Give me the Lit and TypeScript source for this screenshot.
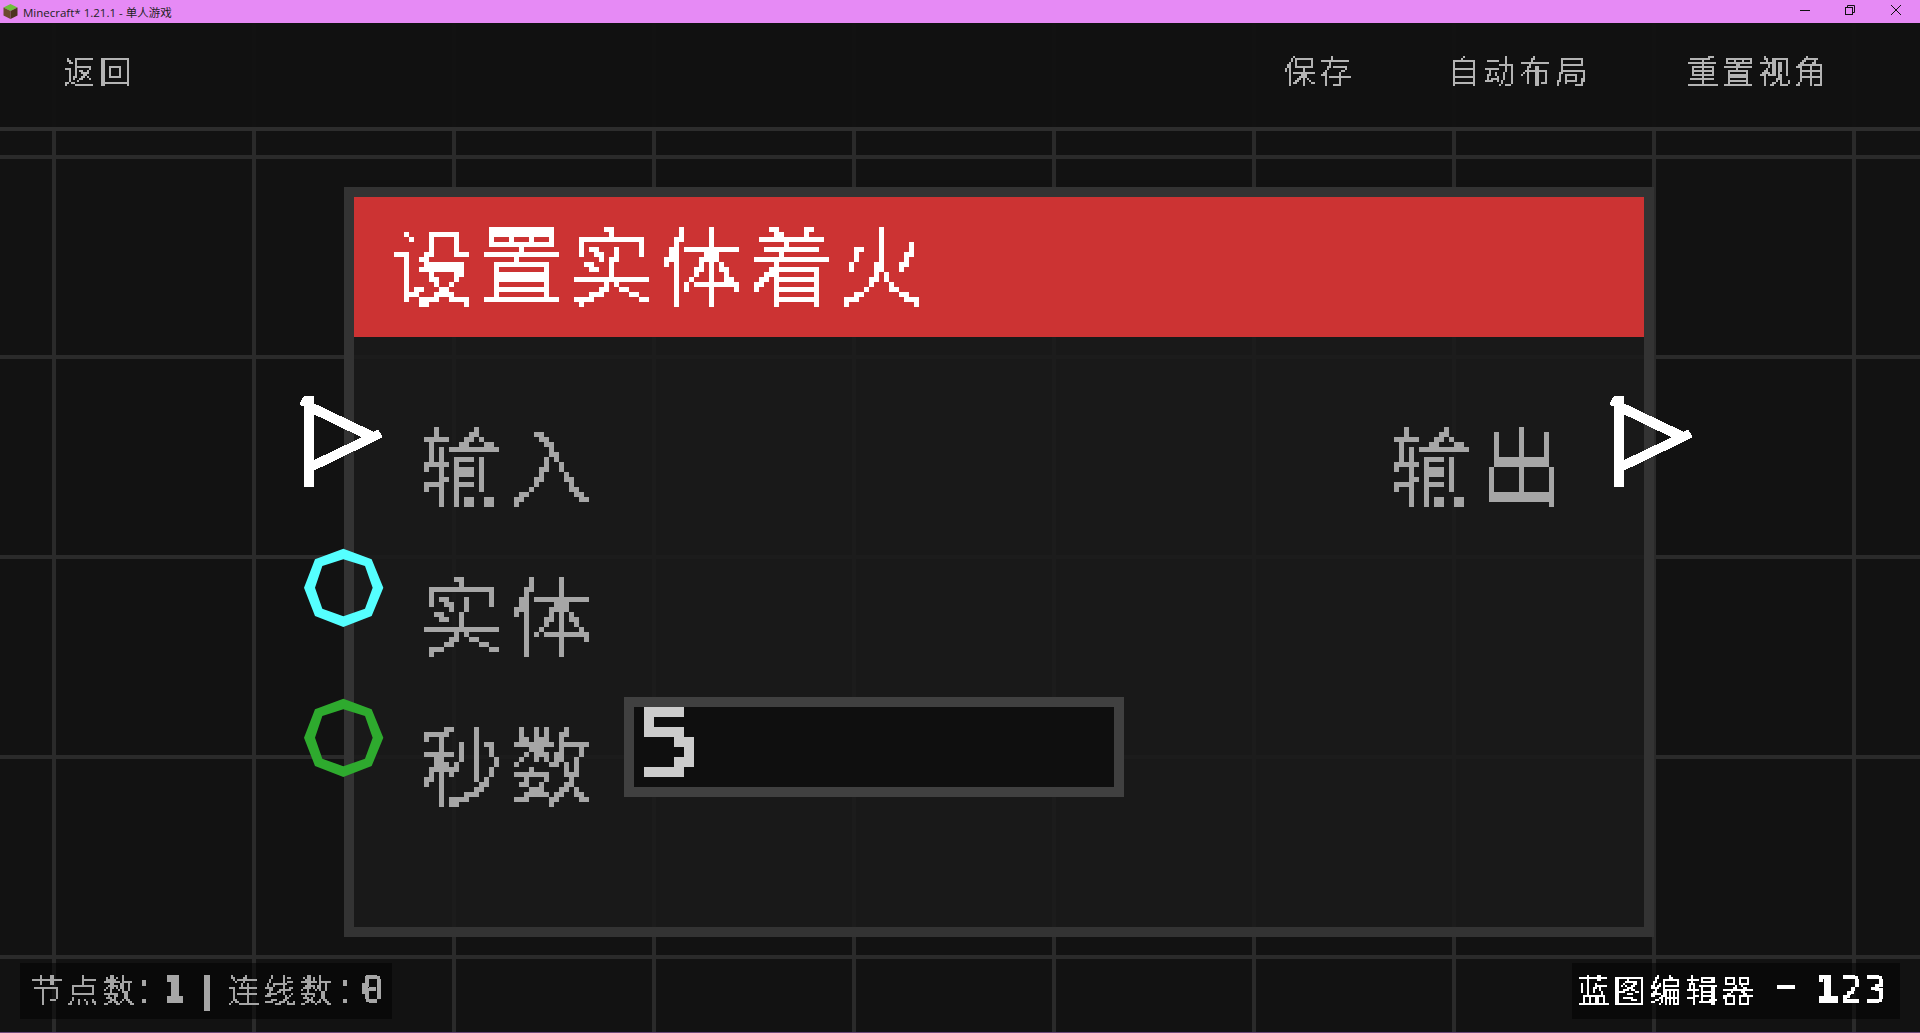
import { LitElement, html, css, svg } from "lit";
import { customElement } from "lit/decorators.js";

const pxFilter = (id: string, n: number, widenX: boolean, fatY: number) => {
  const s = n % 2 ? 1 : n >= 4 ? 2 : 1;
  const o = Math.floor((n - s) / 2);
  const r = (n - s) / 2;
  return svg`<filter id=${id} x="0" y="0" width="100%" height="100%" color-interpolation-filters="sRGB">
    <feOffset in="SourceGraphic" dx=${widenX ? 1 : 0} dy="0" result="sx"/>
    <feMerge result="wide"><feMergeNode in="SourceGraphic"/><feMergeNode in="sx"/></feMerge>
    ${fatY
      ? svg`<feMorphology in="wide" operator="dilate" radius=${`0 ${fatY}`} result="src"/>`
      : svg`<feOffset in="wide" dx="0" dy="0" result="src"/>`}
    <feFlood x=${o} y=${o} width=${s} height=${s} flood-color="#000"/>
    <feComposite width=${n} height=${n}/>
    <feTile result="grid"/>
    <feComposite in="src" in2="grid" operator="in"/>
    <feComponentTransfer result="hard"><feFuncA type="discrete" tableValues=${n === 2 ? "0 1 1 1" : "0 1"}/></feComponentTransfer>
    ${n === 2
      ? svg`<feOffset in="hard" dx="1" dy="0" result="h2"/>
        <feMerge result="row"><feMergeNode in="hard"/><feMergeNode in="h2"/></feMerge>
        <feOffset in="row" dx="0" dy="1" result="row2"/>
        <feMerge><feMergeNode in="row"/><feMergeNode in="row2"/></feMerge>`
      : svg`<feMorphology in="hard" operator="dilate" radius=${r}/>`}
  </filter>`;
};

@customElement("app-root")
export class AppRoot extends LitElement {
  static styles = css`
    :host { display: block; width: 1920px; height: 1033px; overflow: hidden; background: #121212; }
    .defs { position: absolute; width: 0; height: 0; }
    .app { width: 1920px; height: 1033px; display: flex; flex-direction: column; }
    .titlebar { height: 23px; flex: none; background: #e68af5; display: flex; align-items: center; padding-left: 3px; gap: 5px; font: 11.5px "Open Sans", "Noto Sans CJK SC", sans-serif; color: #222; position: relative; }
    .titlebar .ctl { margin-left: auto; display: flex; }
    .titlebar .ctl svg { display: block; }
    .stage { flex: 1; position: relative; overflow: hidden;
      background-color: #121212;
      background-image:
        repeating-linear-gradient(to right, transparent 0 52px, #2a2a2a 52px 56px, transparent 56px 200px),
        repeating-linear-gradient(to bottom, transparent 0 132px, #2a2a2a 132px 136px, transparent 136px 200px);
      border-bottom: 1px solid #6c4a7a; }
    .topbar { border-bottom: 4px solid #2d2d2d; background: rgba(18,18,18,.97); display: flex; align-items: flex-start; padding: 29px 0 0 0; box-sizing: border-box; height: 108px; color: #b4b4b4; }
    .topbar .back { margin-left: 63px; }
    .topbar .right { margin-left: auto; display: flex; gap: 92px; margin-right: 90px; }
    .topbar .reset { margin-left: 3px; }
    .t { display: inline-block; font-family: "Noto Sans CJK SC", sans-serif; font-weight: 300; white-space: nowrap; }
    .n { display: inline-block; font-family: "DejaVu Sans Mono", monospace; white-space: nowrap; }
    .c { display: inline-block; font-family: "Liberation Sans", sans-serif; }
    .b { font-weight: 700; }
    .s2 { font-size: 32px; line-height: 34px; letter-spacing: 4px; filter: url(#p2); }
    .s5 { font-size: 84px; line-height: 90px; letter-spacing: 6px; filter: url(#p5); }
    .d4 { font-size: 38px; line-height: 36px; letter-spacing: 1.13px; filter: url(#p4); }
    .d10 { font-size: 96px; line-height: 70px; height: 70px; width: 70px; margin-left: -10px; filter: url(#p10); }
    .d10 span { display: inline-block; transform: scaleX(1.15); transform-origin: left center; }
    .node { position: absolute; left: 344px; top: 164px; width: 1310px; height: 750px; box-sizing: border-box; border: 10px solid #333; background: rgba(27,27,27,.9); }
    .head { height: 140px; background: #cc3333; color: #fff; padding: 20px 0 0 35px; box-sizing: border-box; }
    .rows { display: flex; flex-direction: column; gap: 60px; padding: 80px 75px 0 65px; color: #a6a6a6; }
    .row { display: flex; height: 90px; align-items: flex-start; }
    .row .out { margin-left: auto; }
    .input { width: 500px; height: 100px; box-sizing: border-box; margin: -20px 0 0 25px; border: 10px solid #404040; background: #0f0f0f; padding-left: 10px; color: #ccc; display: flex; align-items: flex-start; }
    .pin { position: absolute; display: block; }
    .tri { left: -56px; top: 199px; }
    .tri.o { left: 1254px; }
    .ring { left: -50px; }
    .ring.a { top: 351px; }
    .ring.b { top: 501px; }
    .status { position: absolute; top: 940px; height: 56px; box-sizing: border-box; background: rgba(0,0,0,.5); display: flex; align-items: flex-start; padding-top: 8px; color: #a6a6a6; }
    .status.l { left: 20px; width: 372px; padding-left: 10px; }
    .status.r { left: 1572px; width: 328px; padding-left: 5px; color: #fff; }
    .one { margin-left: 13px; }
    .bar { margin: 4px 0 0 8.6px; line-height: 28px; height: 28px; }
    .cj2 { margin-left: 8px; }
    .colon2 { margin-left: 4px; }
    .zero { margin-left: 10px; }
    .dash { margin: -6px 0 0 11px; font-size: 60px; }
    .digits { margin-left: 10px; }
  `;

  render() {
    const tri = svg`<path fill="#fff" fill-rule="evenodd" shape-rendering="crispEdges" d="M72 48H102V70L280 155L295 148L308 172L102 272V320H72V80L58 75L64 60ZM102 103V240L245 172Z"/>`;
    const oct = (c: string) => svg`<path fill=${c} fill-rule="evenodd" d="M190 505L275 537L310 622L275 707L190 740L105 707L72 622L105 537ZM190 537L127 557L105 622L127 685L190 708L255 685L278 622L255 557Z"/>`;
    return html`
      <svg class="defs" aria-hidden="true"><defs>
        ${pxFilter("p2", 2, false, 0)}${pxFilter("p4", 4, false, 0)}${pxFilter("p5", 5, true, 1)}${pxFilter("p10", 10, false, 1)}
      </defs></svg>
      <div class="app">
        <div class="titlebar">
          <svg width="15" height="17" viewBox="0 0 15 17"><path fill="#6fbf3c" d="M7.5 1L14.5 4.5L7.5 8L.5 4.5Z"/><path fill="#6b4a2e" d="M.5 4.5L7.5 8V16L.5 12.5Z"/><path fill="#4d3420" d="M14.5 4.5L7.5 8V16L14.5 12.5Z"/></svg>
          <span>Minecraft* 1.21.1 - 单人游戏</span>
          <div class="ctl">
            <svg width="120" height="23" viewBox="0 0 120 23" fill="none" stroke="#111" stroke-width="1">
              <path d="M0 10.5H10"/>
              <rect x="45.5" y="7.5" width="7" height="7"/><path d="M47.5 7.5V5.5H54.5V12.5H52.5"/>
              <path d="M91 5L101 15M101 5L91 15"/>
            </svg>
          </div>
        </div>
        <div class="stage">
          <div class="topbar">
            <span class="t s2 back">返回</span>
            <div class="right">
              <span class="t s2">保存</span>
              <span class="t s2">自动布局</span>
              <span class="t s2 reset">重置视角</span>
            </div>
          </div>
          <div class="node">
            <div class="head"><span class="t s5">设置实体着火</span></div>
            <div class="rows">
              <div class="row"><span class="t s5">输入</span><span class="t s5 out">输出</span></div>
              <div class="row"><span class="t s5">实体</span></div>
              <div class="row"><span class="t s5">秒数</span><div class="input"><span class="n d10"><span>5</span></span></div></div>
            </div>
            <svg class="pin tri" width="85" height="92" viewBox="54 48 255 276">${tri}</svg>
            <svg class="pin tri o" width="85" height="92" viewBox="54 48 255 276">${tri}</svg>
            <svg class="pin ring a" width="80" height="80" viewBox="72 503 240 240">${oct("#55ffff")}</svg>
            <svg class="pin ring b" width="80" height="80" viewBox="72 503 240 240">${oct("#2eaa2e")}</svg>
          </div>
          <div class="status l">
            <span class="t s2">节点数</span><span class="c d4">:</span>
            <span class="n d4 b one">1</span><span class="n d4 bar">|</span>
            <span class="t s2 cj2">连线数</span><span class="c d4 colon2">:</span><span class="n d4 zero">0</span>
          </div>
          <div class="status r">
            <span class="t s2">蓝图编辑器</span><span class="n d4 dash">-</span><span class="n d4 digits"><span class="b">1</span>23</span>
          </div>
        </div>
      </div>
    `;
  }
}
